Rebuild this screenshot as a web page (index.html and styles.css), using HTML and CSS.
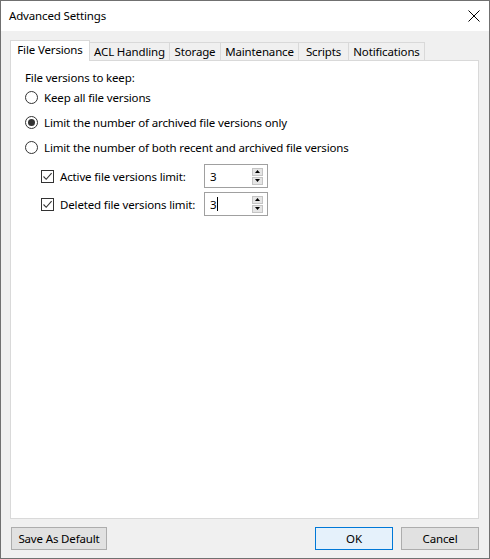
FILE: index.html
```html
<!DOCTYPE html>
<html>
<head>
<meta charset="utf-8">
<link rel="stylesheet" href="styles.css">
</head>
<body>
<div class="window">
  <div class="titlebar">
    <span class="title">Advanced Settings</span>
    <svg class="close" width="12" height="12" viewBox="0 0 12 12"><path d="M0.5 0.5 L11.5 11.5 M11.5 0.5 L0.5 11.5" stroke="#000" stroke-width="1" fill="none"/></svg>
  </div>
  <div class="body">
    <div class="tabs">
      <div class="tab selected w-fv">File Versions</div>
      <div class="tab w-acl">ACL Handling</div>
      <div class="tab w-st">Storage</div>
      <div class="tab w-mt">Maintenance</div>
      <div class="tab w-sc">Scripts</div>
      <div class="tab w-nt">Notifications</div>
    </div>
    <div class="panel">
      <div class="heading">File versions to keep:</div>
      <div class="row radio-row"><span class="radio"></span><span>Keep all file versions</span></div>
      <div class="row radio-row"><span class="radio checked"></span><span>Limit the number of archived file versions only</span></div>
      <div class="row radio-row"><span class="radio"></span><span>Limit the number of both recent and archived file versions</span></div>
      <div class="row check-row">
        <span class="checkbox"><svg width="11" height="11" viewBox="0 0 11 11"><path d="M1.5 5.5 L4.2 8.3 L9.6 2.2" stroke="#333" stroke-width="1.1" fill="none"/></svg></span>
        <span class="check-label">Active file versions limit:</span>
        <div class="spinner"><span class="spin-val">3</span><div class="spin-btns"><span class="spin-btn"><svg width="5" height="3" viewBox="0 0 5 3"><path d="M0 3 L2.5 0 L5 3Z" fill="#000"/></svg></span><span class="spin-btn"><svg width="5" height="3" viewBox="0 0 5 3"><path d="M0 0 L2.5 3 L5 0Z" fill="#000"/></svg></span></div></div>
      </div>
      <div class="row check-row">
        <span class="checkbox"><svg width="11" height="11" viewBox="0 0 11 11"><path d="M1.5 5.5 L4.2 8.3 L9.6 2.2" stroke="#333" stroke-width="1.1" fill="none"/></svg></span>
        <span class="check-label">Deleted file versions limit:</span>
        <div class="spinner"><span class="spin-val">3<span class="caret"></span></span><div class="spin-btns"><span class="spin-btn"><svg width="5" height="3" viewBox="0 0 5 3"><path d="M0 3 L2.5 0 L5 3Z" fill="#000"/></svg></span><span class="spin-btn"><svg width="5" height="3" viewBox="0 0 5 3"><path d="M0 0 L2.5 3 L5 0Z" fill="#000"/></svg></span></div></div>
      </div>
    </div>
    <div class="footer">
      <button class="btn btn-save">Save As Default</button>
      <div class="spacer"></div>
      <button class="btn btn-ok">OK</button>
      <button class="btn btn-cancel">Cancel</button>
    </div>
  </div>
</div>
</body>
</html>
```
FILE: styles.css
```css
* { box-sizing: border-box; }
html, body { margin: 0; padding: 0; }
body {
  font-family: "Noto Sans", "Open Sans", sans-serif;
  font-size: 11.5px;
  letter-spacing: -0.15px;
  color: #000;
  background: #f0f0f0;
}
.window {
  width: 490px;
  height: 559px;
  border: 1px solid #707070;
  background: #f0f0f0;
  display: flex;
  flex-direction: column;
}
.titlebar {
  height: 30px;
  background: #fff;
  display: flex;
  align-items: center;
  padding: 0 0 0 8px;
  position: relative;
}
.title { margin-top: -1px; }
.close { position: absolute; left: 467px; top: 9px; }
.body {
  flex: 1;
  padding: 9px 10px 0 9px;
  display: flex;
  flex-direction: column;
}
.tabs {
  height: 20px;
  display: flex;
  align-items: flex-end;
}
.tab {
  height: 18px;
  border: 1px solid #d9d9d9;
  border-bottom: none;
  background: #f0f0f0;
  margin-left: -1px;
  display: flex;
  align-items: center;
  justify-content: center;
  line-height: 16px;
  white-space: nowrap;
}
.tab.selected {
  height: 21px;
  margin-left: 0;
  margin-bottom: -1px;
  background: #fff;
  position: relative;
  z-index: 1;
  padding-bottom: 2px;
}
.w-fv { width: 80px; }
.w-acl { width: 81px; margin-left: -1px; }
.w-st { width: 52px; }
.w-mt { width: 79px; }
.w-sc { width: 51px; }
.w-nt { width: 77px; }
.panel {
  width: 469px;
  height: 459px;
  border: 1px solid #d9d9d9;
  background: #fff;
  padding: 8px 0 0 14px;
}
.heading { height: 16px; line-height: 16px; margin-top: 1px; margin-bottom: -1px; }
.row { display: flex; align-items: center; white-space: nowrap; }
.radio-row { height: 25px; }
.radio {
  width: 13px;
  height: 13px;
  border: 1px solid #333;
  border-radius: 50%;
  margin-right: 6px;
  display: flex;
  align-items: center;
  justify-content: center;
  flex: none;
}
.radio.checked::after {
  content: "";
  width: 7px;
  height: 7px;
  border-radius: 50%;
  background: #333;
}
.check-row { height: 28px; padding-left: 16px; }
.radio-row + .check-row { margin-top: 2px; }
.checkbox {
  width: 13px;
  height: 13px;
  border: 1px solid #333;
  background: #fff;
  margin-right: 6px;
  display: flex;
  align-items: center;
  justify-content: center;
  flex: none;
}
.checkbox svg { display: block; }
.check-label { width: 144px; flex: none; }
.spinner {
  width: 64px;
  height: 24px;
  border: 1px solid #a0a0a0;
  background: #fff;
  display: flex;
  align-items: center;
  padding-left: 5px;
}
.spin-val { flex: 1; display: flex; align-items: center; }
.caret {
  display: inline-block;
  width: 1px;
  height: 14px;
  background: #000;
  margin-left: 1px;
}
.spin-btns {
  display: flex;
  flex-direction: column;
  margin-right: 4px;
  gap: 1px;
}
.spin-btn {
  width: 11px;
  height: 8px;
  background: #e5e5e5;
  border: 1px solid #c4c4c4;
  display: flex;
  align-items: center;
  justify-content: center;
}
.spin-btn svg { display: block; }
.footer {
  display: flex;
  align-items: flex-start;
  padding: 8px 0 0 1px;
}
.spacer { flex: 1; }
.btn {
  height: 23px;
  font-family: "Noto Sans", "Open Sans", sans-serif;
  font-size: 11.5px;
  letter-spacing: -0.15px;
  line-height: 16px;
  padding: 0;
  border: 1px solid #adadad;
  background: #e1e1e1;
  color: #000;
}
.btn-save { width: 96px; }
.btn-ok { width: 78px; background: #e5f1fb; border-color: #0078d7; margin-right: 8px; }
.btn-cancel { width: 78px; }
```
